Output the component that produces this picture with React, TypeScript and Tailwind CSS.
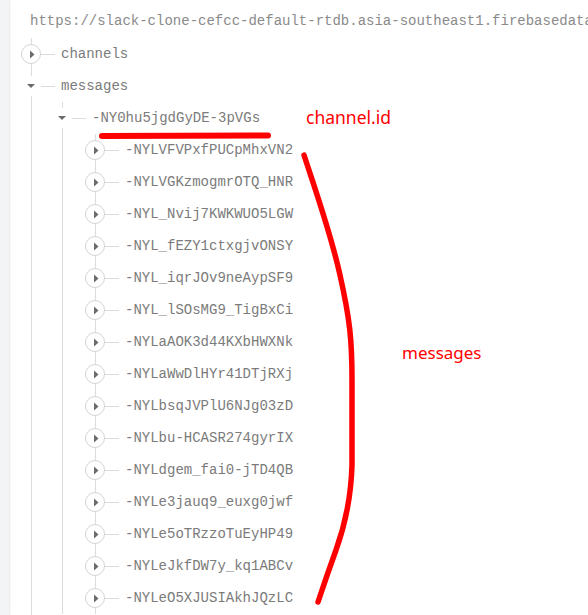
import React from "react";

const mono = { fontFamily: '"Liberation Mono", "DejaVu Sans Mono", monospace' };

const children = [
  "-NYLVFVPxfPUCpMhxVN2",
  "-NYLVGKzmogmrOTQ_HNR",
  "-NYL_Nvij7KWKWUO5LGW",
  "-NYL_fEZY1ctxgjvONSY",
  "-NYL_iqrJOv9neAypSF9",
  "-NYL_lSOsMG9_TigBxCi",
  "-NYLaAOK3d44KXbHWXNk",
  "-NYLaWwDlHYr41DTjRXj",
  "-NYLbsqJVPlU6NJg03zD",
  "-NYLbu-HCASR274gyrIX",
  "-NYLdgem_fai0-jTD4QB",
  "-NYLe3jauq9_euxg0jwf",
  "-NYLe5oTRzzoTuEyHP49",
  "-NYLeJkfDW7y_kq1ABCv",
  "-NYLeO5XJUSIAkhJQzLC",
];

function Collapsed() {
  return (
    <div className="-ml-[11px] w-5 h-5 shrink-0 rounded-full border border-[#d4d4d4] bg-white flex items-center justify-center">
      <svg width="6" height="9" viewBox="0 0 6 9" className="ml-[1px]">
        <path d="M1 0.5 L5.5 4.5 L1 8.5 Z" fill="#6b6b6b" />
      </svg>
    </div>
  );
}

function Expanded() {
  return (
    <div className="-ml-[11px] w-5 h-5 shrink-0 bg-white flex items-center justify-center">
      <svg width="10" height="6" viewBox="0 0 10 6">
        <path d="M1 1 L9 1 L5 5 Z" fill="#6b6b6b" />
      </svg>
    </div>
  );
}

function Row({ label, open }: { label: string; open?: boolean }) {
  return (
    <div className="flex items-center h-8">
      {open ? <Expanded /> : <Collapsed />}
      <div className="w-[14px] h-px bg-[#dcdcdc] shrink-0" />
      <span className="ml-[6px] text-[14px] text-[#7b7b7b] whitespace-nowrap leading-none" style={mono}>
        {label}
      </span>
    </div>
  );
}

export default function App() {
  return (
    <div className="relative w-[588px] h-[615px] overflow-hidden bg-white flex">
      <div className="w-[9px] shrink-0 bg-[#f3f4f6] shadow-[1px_0_2px_rgba(0,0,0,0.10)]" />
      <div className="flex-1 flex flex-col min-w-0 overflow-hidden">
        <div className="h-[38px] pt-[4px] pl-[21px] flex items-center whitespace-nowrap text-[14px] text-[#8a8a8a]" style={mono}>
          https://slack-clone-cefcc-default-rtdb.asia-southeast1.firebasedatabase.app/
        </div>
        <div className="ml-[22px] border-l border-[#dcdcdc] flex-1">
          <Row label="channels" />
          <Row label="messages" open />
          <div className="ml-[30px] border-l border-[#dcdcdc]">
            <Row label="-NY0hu5jgdGyDE-3pVGs" open />
            <div className="ml-[32px] border-l border-[#dcdcdc]">
              {children.map((c) => (
                <Row key={c} label={c} />
              ))}
            </div>
          </div>
        </div>
      </div>

      <svg className="absolute inset-0 pointer-events-none" width="588" height="615" viewBox="0 0 588 615">
        <path d="M102 136 L268 135.5" stroke="#ff0000" strokeWidth="6" strokeLinecap="round" fill="none" />
        <path
          d="M304 155 C312 180, 330 230, 340 275 S352 340, 352 380 L352 465 C351 500, 345 525, 336 550 S322 590, 318 602"
          stroke="#ff0000"
          strokeWidth="5.5"
          strokeLinecap="round"
          strokeLinejoin="round"
          fill="none"
        />
      </svg>
      <div
        className="absolute left-[306px] top-[109px] text-[17.5px] leading-none text-[#ff0000]"
        style={{ fontFamily: '"Noto Sans", "Open Sans", sans-serif' }}
      >
        channel.id
      </div>
      <div
        className="absolute left-[402px] top-[344px] text-[17px] leading-none text-[#ff0000]"
        style={{ fontFamily: '"Noto Sans", "Open Sans", sans-serif' }}
      >
        messages
      </div>
    </div>
  );
}
